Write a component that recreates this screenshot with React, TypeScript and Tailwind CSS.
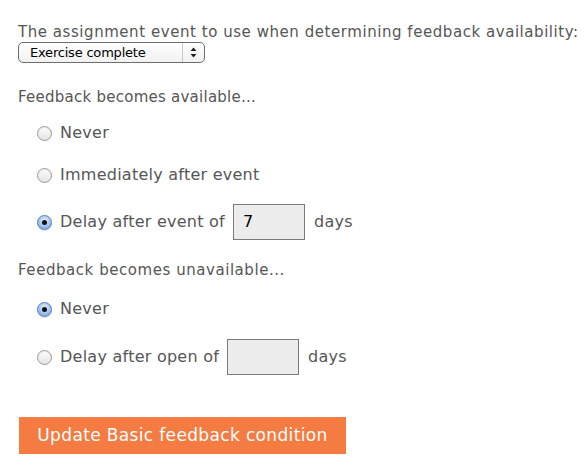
import React from "react";

function Radio({ checked }: { checked?: boolean }) {
  return checked ? (
    <span className="flex h-[15px] w-[15px] shrink-0 items-center justify-center rounded-full border border-[#5a7fb8] bg-[radial-gradient(circle_at_50%_35%,#e6f0fd_0%,#9fc3ee_55%,#5f94d8_100%)] shadow-[0_1px_1px_rgba(0,0,0,0.15)]">
      <span className="h-[5px] w-[5px] rounded-full bg-[#111]" />
    </span>
  ) : (
    <span className="h-[15px] w-[15px] shrink-0 rounded-full border border-[#9a9a9a] bg-[linear-gradient(#fdfdfd,#e4e4e4)] shadow-[inset_0_1px_1px_rgba(0,0,0,0.08)]" />
  );
}

function DayBox({ value }: { value?: string }) {
  return (
    <span className="flex h-[36px] w-[72px] items-center border border-[#7a7a7a] bg-[#ececec] px-[9px] text-[16px] tracking-normal text-black">
      {value}
    </span>
  );
}

export default function App() {
  const font = { fontFamily: '"DejaVu Sans", Verdana, sans-serif' };
  return (
    <div className="h-[469px] w-[586px] bg-white pl-[18px] pt-[23px] text-[15px] text-[#565656]" style={font}>
      <p className="leading-[18px] tracking-[0.55px]">The assignment event to use when determining feedback availability:</p>

      {/* event select */}
      <div className="mt-[1px] flex h-[21px] w-[187px] items-center justify-between rounded-[5px] border border-[#6e6e6e] bg-[linear-gradient(#ffffff,#f1f1f1)] pl-[11px] pr-[7px] text-[13px] text-black" style={{ fontFamily: '"DejaVu Sans", sans-serif' }}>
        <span className="tracking-[-0.2px]">Exercise complete</span>
        <span className="flex h-full items-center border-l border-[#c8c8c8] pl-[7px]">
          <svg width="7" height="11" viewBox="0 0 7 11">
            <path d="M3.5 0.5 L6.5 4 L0.5 4 Z" fill="#222" />
            <path d="M3.5 10.5 L6.5 7 L0.5 7 Z" fill="#222" />
          </svg>
        </span>
      </div>

      <p className="mt-[25px] leading-[18px] tracking-[0.25px]">Feedback becomes available...</p>

      <div className="ml-[19px] mt-[18px] flex flex-col text-[16px] tracking-[0.25px]">
        <label className="flex h-[18px] items-center gap-[8px]">
          <Radio />
          <span>Never</span>
        </label>
        <label className="mt-[24px] flex h-[18px] items-center gap-[8px]">
          <Radio />
          <span>Immediately after event</span>
        </label>
        <label className="mt-[20px] flex h-[36px] items-center gap-[8px]">
          <Radio checked />
          <span>Delay after event of</span>
          <DayBox value="7" />
          <span className="ml-[1px]">days</span>
        </label>
      </div>

      <p className="mt-[21px] leading-[18px] tracking-[0.55px]">Feedback becomes unavailable...</p>

      <div className="ml-[19px] mt-[21px] flex flex-col text-[16px] tracking-[0.25px]">
        <label className="flex h-[18px] items-center gap-[8px]">
          <Radio checked />
          <span>Never</span>
        </label>
        <label className="mt-[21px] flex h-[36px] items-center gap-[8px]">
          <Radio />
          <span>Delay after open of</span>
          <DayBox />
          <span className="ml-[1px]">days</span>
        </label>
      </div>

      <button className="ml-[1px] mt-[42px] h-[37px] w-[327px] bg-[#f47b42] text-[17px] tracking-[0.35px] text-white">
        Update Basic feedback condition
      </button>
    </div>
  );
}
